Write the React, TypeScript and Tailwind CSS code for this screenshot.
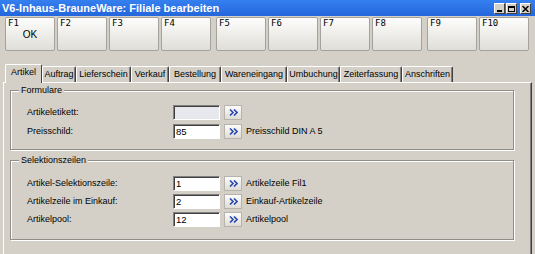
// Filiale bearbeiten — classic Windows dialog

const fkeys = [
  { k: 'F1', t: 'OK' },
  { k: 'F2' },
  { k: 'F3' },
  { k: 'F4' },
  { k: 'F5', gap: true },
  { k: 'F6' },
  { k: 'F7' },
  { k: 'F8' },
  { k: 'F9', gap: true },
  { k: 'F10' },
];

const tabs = [
  { t: 'Artikel', w: 'w-[37px]', active: true },
  { t: 'Auftrag', w: 'w-[34px]' },
  { t: 'Lieferschein', w: 'w-[55px]' },
  { t: 'Verkauf', w: 'w-[38px]' },
  { t: 'Bestellung', w: 'w-[52px]' },
  { t: 'Wareneingang', w: 'w-[66px]' },
  { t: 'Umbuchung', w: 'w-[53px]' },
  { t: 'Zeiterfassung', w: 'w-[62px]' },
  { t: 'Anschriften', w: 'w-[51px]' },
];

function Chevrons() {
  return (
    <svg width="9" height="7" viewBox="0 0 9 7">
      <path d="M1 0.5 L4 3.5 L1 6.5 M5 0.5 L8 3.5 L5 6.5" fill="none" stroke="#2a48b0" strokeWidth="1.6" />
    </svg>
  );
}

function Row({ label, value, desc, disabled }: { label: string; value: string; desc?: string; disabled?: boolean }) {
  return (
    <div className="flex items-center h-[15px]">
      <div className="w-[146px] text-[9px] text-black">{label}</div>
      <div
        className={`w-[47px] h-[15px] border border-t-[#808080] border-l-[#808080] border-r-white border-b-white shadow-[inset_1px_1px_0_#404040] pl-[2px] pt-[1px] text-[9.5px] leading-[12px] ${
          disabled ? 'bg-[#e6e8ee]' : 'bg-white'
        }`}
      >
        {value}
      </div>
      <div className="ml-[4px] w-[18px] h-[15px] border border-[#b5b3ab] bg-gradient-to-b from-[#fcfcfa] to-[#dedcd4] flex items-center justify-center">
        <Chevrons />
      </div>
      {desc && <div className="ml-[4px] text-[9px] text-black">{desc}</div>}
    </div>
  );
}

function Group({ title, children, cls }: { title: string; children: React.ReactNode; cls: string }) {
  return (
    <div className={`relative w-[504px] shrink-0 border border-[#8f8d88] shadow-[inset_1px_1px_0_#fff,1px_1px_0_#fff] pl-[16px] flex flex-col ${cls}`}>
      <span className="absolute -top-[7px] left-[8px] px-[2px] bg-[#d4d0c8] text-[9px] leading-[12px] text-black">{title}</span>
      {children}
    </div>
  );
}

export default function App() {
  return (
    <div
      className="w-[535px] h-[254px] overflow-hidden bg-[#d4d0c8] select-none flex flex-col"
      style={{ fontFamily: '"Liberation Sans", Arial, sans-serif' }}
    >
      {/* Title bar */}
      <div className="h-[16px] shrink-0 bg-gradient-to-b from-[#3580f0] to-[#2466dc] flex items-center justify-between pl-[2px] pr-[4px]">
        <span className="text-white font-bold text-[11px] leading-none">V6-Inhaus-BrauneWare: Filiale bearbeiten</span>
        <div className="flex gap-[1px] mt-[1px]">
          {['min', 'max', 'close'].map((b) => (
            <div
              key={b}
              className={`w-[11px] h-[11px] bg-[#d4d0c8] border border-t-white border-l-white border-r-[#404040] border-b-[#404040] flex items-center justify-center ${
                b === 'close' ? 'ml-[2px]' : ''
              }`}
            >
              {b === 'min' && <div className="w-[5px] h-[2px] bg-black mt-[5px]" />}
              {b === 'max' && <div className="w-[7px] h-[6px] border border-black border-t-2" />}
              {b === 'close' && (
                <svg width="7" height="6" viewBox="0 0 7 6">
                  <path d="M0.5 0 L6.5 6 M6.5 0 L0.5 6" stroke="#000" strokeWidth="1.5" />
                </svg>
              )}
            </div>
          ))}
        </div>
      </div>

      {/* Function keys */}
      <div className="flex shrink-0 pl-[5px] mt-[1px] gap-[2px]">
        {fkeys.map((f) => (
          <div
            key={f.k}
            className={`w-[50px] h-[34px] rounded-[2px] border border-[#a4a29c] bg-gradient-to-b from-[#fdfdfc] to-[#dfded8] flex flex-col px-[2px] ${
              f.gap ? 'ml-[3px]' : ''
            }`}
          >
            <span className="text-[9px] leading-[11px] text-black font-['DejaVu_Sans_Mono',monospace]">{f.k}</span>
            {f.t && <span className="self-center mt-[1px] text-[10px] leading-none text-black">{f.t}</span>}
          </div>
        ))}
      </div>

      {/* Tabs */}
      <div className="flex shrink-0 items-end pl-[5px] mt-[12px] h-[19px]">
        {tabs.map((t) => (
          <div
            key={t.t}
            className={`${t.w} shrink-0 flex items-center justify-center text-[9px] text-black border-l border-t border-l-white border-t-white border-r border-r-[#404040] rounded-t-[2px] ${
              t.active ? 'h-[19px] relative z-10 bg-[#d4d0c8] -mb-[1px] pb-[2px]' : 'h-[16px] shadow-[inset_-1px_0_0_#808080]'
            }`}
          >
            {t.t}
          </div>
        ))}
      </div>

      {/* Tab page */}
      <div className="ml-[3px] w-[529px] h-[200px] shrink-0 border-l border-t border-l-white border-t-white border-r border-r-[#404040] shadow-[inset_-1px_0_0_#808080] pl-[6px] pt-[7px] flex flex-col gap-[10px]">
        <Group title="Formulare" cls="h-[60px] pt-[14px] gap-[4px]">
          <Row label="Artikeletikett:" value="" disabled />
          <Row label="Preisschild:" value="85" desc="Preisschild DIN A 5" />
        </Group>
        <Group title="Selektionszeilen" cls="h-[80px] pt-[15px] gap-[3px]">
          <Row label="Artikel-Selektionszeile:" value="1" desc="Artikelzeile Fil1" />
          <Row label="Artikelzeile im Einkauf:" value="2" desc="Einkauf-Artikelzeile" />
          <Row label="Artikelpool:" value="12" desc="Artikelpool" />
        </Group>
      </div>
    </div>
  );
}
